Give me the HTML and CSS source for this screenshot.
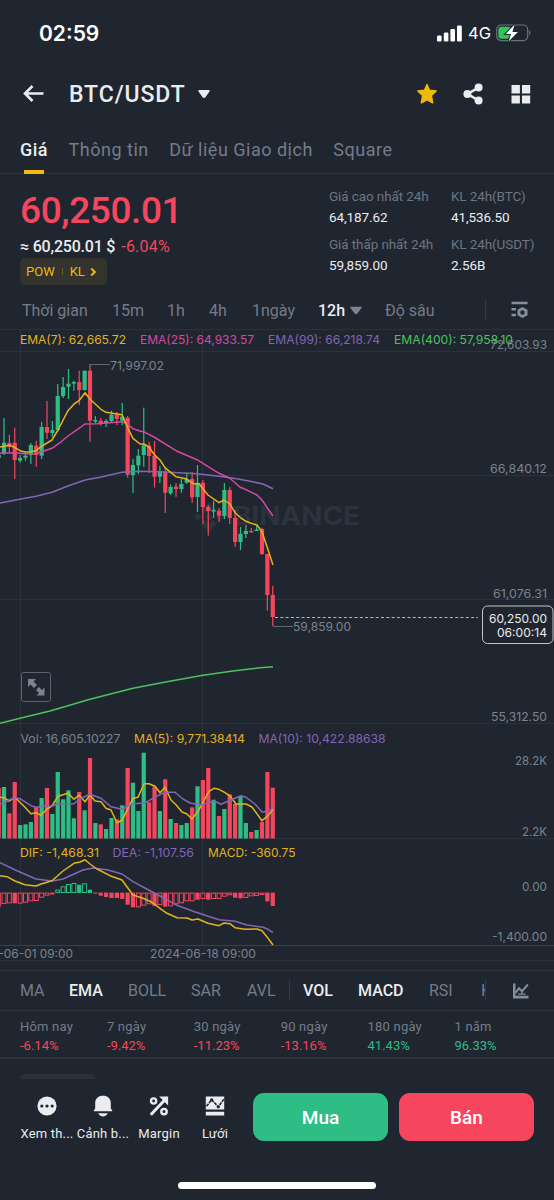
FILE: index.html
```
<!DOCTYPE html>
<html lang="vi">
<head>
	<meta charset="UTF-8">
	<title>BTC/USDT</title>
	<link rel="stylesheet" href="styles.css">
</head>
<body>
	<div class="status">
		<span class="time">02:59</span>
		<svg class="signal" width="26" height="17" viewBox="0 0 26 17" fill="#fff">
			<rect x="0" y="10.5" width="4.6" height="6" rx="1.3"/>
			<rect x="6.8" y="7.5" width="4.6" height="9" rx="1.3"/>
			<rect x="13.4" y="4" width="4.6" height="12.5" rx="1.3"/>
			<rect x="20" y="0.5" width="4.8" height="16" rx="1.3"/>
		</svg>
		<span class="net">4G</span>
		<svg class="battery" width="36" height="18" viewBox="0 0 36 18">
			<rect x="0.7" y="1" width="31" height="15.6" rx="4.5" fill="none" stroke="#6c727a" stroke-width="1.2"/>
			<rect x="2.4" y="2.8" width="12.5" height="12" rx="3" fill="#30c759"/>
			<path d="M33.2 6.2c1.6.5 1.6 4.6 0 5.2z" fill="#6c727a"/>
			<path d="M18.600 0.6L9.600 10h5.400l-2.400 7.400L21.800 8h-5.400z" fill="#fff" stroke="#1f2630" stroke-width="2" paint-order="stroke"/>
		</svg>
	</div>

	<div class="header">
		<svg class="back" width="22" height="18" viewBox="0 0 22 18" fill="none" stroke="#eaecef" stroke-width="2.6"><path d="M20.5 8.500H2.500M9.500 1L2 8.500l7.500 7.500"/></svg>
		<h1>BTC/USDT</h1>
		<svg class="down" width="12" height="9" viewBox="0 0 12 9" fill="#eaecef"><path d="M.5 0h11v1.6L7 7.800H5L.5 1.600z"/></svg>
		<div class="tools">
			<svg width="22" height="22" viewBox="0 0 22 22" fill="#f0b90b" stroke="#f0b90b" stroke-width="1.400" stroke-linejoin="round"><path d="M11 1.600l2.500 5.600 6.700.8-4.800 4.500 1.300 7.400-5.700-2.900-5.700 2.900 1.300-7.400L1.800 8l6.700-.8z"/></svg>
			<svg width="22" height="22" viewBox="0 0 22 22" fill="#eaecef"><path d="M4.500 11L15 4.800M4.500 11L15 17.200" stroke="#eaecef" stroke-width="2.600"/><circle cx="4.400" cy="11" r="4"/><circle cx="15.600" cy="4.500" r="4"/><circle cx="15.600" cy="17.500" r="4"/></svg>
			<svg width="22" height="22" viewBox="0 0 22 22" fill="#eaecef"><path d="M1.500 2h8.400v8.400H1.500zM12 2h8.200v8.400H12zM1.500 12.400h8.400v8.200H1.500zM12 12.400h8.200v8.200H12z"/></svg>
		</div>
	</div>

	<div class="tabs">
		<a class="on">Giá</a>
		<a>Thông tin</a>
		<a>Dữ liệu Giao dịch</a>
		<a>Square</a>
	</div>

	<div class="summary">
		<div class="price">
			<div class="last">60,250.01</div>
			<div class="sub"><span>≈ 60,250.01 $</span><em>-6.04%</em></div>
			<div class="tag"><span>POW</span><i></i><span>KL</span>
				<svg width="7" height="10" viewBox="0 0 7 10" fill="none" stroke="#f0b90b" stroke-width="2"><path d="M1.200 1.500L4.800 5l-3.600 3.500"/></svg>
			</div>
		</div>
		<div class="stats">
			<div><label>Giá cao nhất 24h</label><b>64,187.62</b></div>
			<div><label>KL 24h(BTC)</label><b>41,536.50</b></div>
			<div><label>Giá thấp nhất 24h</label><b>59,859.00</b></div>
			<div><label>KL 24h(USDT)</label><b>2.56B</b></div>
		</div>
	</div>

	<div class="intervals">
		<span>Thời gian</span>
		<span>15m</span>
		<span>1h</span>
		<span>4h</span>
		<span>1ngày</span>
		<span class="on">12h</span>
		<svg width="12" height="9" viewBox="0 0 12 9" fill="#7b838f"><path d="M.300.800h11.400v1L7 8H5L.300 1.800z"/></svg>
		<span>Độ sâu</span>
		<i></i>
		<svg width="17" height="18" viewBox="0 0 17 18" fill="#848e9c"><path d="M.500.800h16v2.500H.500zM.500 7h4.500v2.400H.500zM.500 12.800h4.500v2.400H.500z"/><path fill-rule="evenodd" d="M11.500 6l5 2.800v5.400l-5 2.800-5-2.800V8.800zm0 3.300a2.200 2.200 0 1 0 0 4.400 2.200 2.200 0 0 0 0-4.400z"/></svg>
	</div>

	<!-- biểu đồ nến + khối lượng + MACD -->
	<svg id="chart" class="chart" width="554" height="641" viewBox="0 329 554 641"></svg>

	<div class="indicators">
		<span>MA</span>
		<span class="on">EMA</span>
		<span>BOLL</span>
		<span>SAR</span>
		<span>AVL</span>
		<i></i>
		<span class="on">VOL</span>
		<span class="on">MACD</span>
		<span>RSI</span>
		<span class="cut">KDJ</span>
		<i></i>
		<svg width="16" height="16" viewBox="0 0 16 16" fill="none" stroke="#848e9c" stroke-width="2"><path d="M1.200 0.500v13.600H15.500" stroke-width="2.600"/><path d="M2.500 9.800l3.500-4.500 3 3L14.800 1.500"/><path d="M5 11.200h7.500M8.800 8v3" stroke-width="1.300"/></svg>
	</div>

	<div class="perf">
		<div><label>Hôm nay</label><b class="red">-6.14%</b></div>
		<div><label>7 ngày</label><b class="red">-9.42%</b></div>
		<div><label>30 ngày</label><b class="red">-11.23%</b></div>
		<div><label>90 ngày</label><b class="red">-13.16%</b></div>
		<div><label>180 ngày</label><b class="green">41.43%</b></div>
		<div><label>1 năm</label><b class="green">96.33%</b></div>
	</div>

	<div class="peek"><div></div></div>

	<div class="bottom">
		<div class="act">
			<svg width="20" height="22" viewBox="0 0 20 22"><circle cx="10" cy="11" r="9.600" fill="#eaecef"/><g fill="#1f2630"><circle cx="4.800" cy="11" r="1.600"/><circle cx="10" cy="11" r="1.600"/><circle cx="15.200" cy="11" r="1.600"/></g></svg>
			<span>Xem th...</span>
		</div>
		<div class="act">
			<svg width="20" height="22" viewBox="0 0 20 22" fill="#eaecef"><path d="M2.200 8C2.200 3.500 5.500.8 10 .8S17.800 3.500 17.800 8v5.500l1.400 2v.7H.800v-.7l1.400-2zM5.200 18.200h9.600c-.8 2-2.700 3.200-4.800 3.200s-4-1.200-4.800-3.200z"/></svg>
			<span>Cảnh b...</span>
		</div>
		<div class="act">
			<svg width="20" height="22" viewBox="0 0 20 22" fill="none" stroke="#eaecef" stroke-width="2.400"><circle cx="4.600" cy="6" r="2.600"/><circle cx="15" cy="16.600" r="2.700"/><path d="M1.800 19.800L15.500 5.200" stroke-width="3"/><path d="M10.200 1.600h8.900v8.900z" fill="#eaecef" stroke="none"/></svg>
			<span>Margin</span>
		</div>
		<div class="act">
			<svg width="20" height="22" viewBox="0 0 20 22"><path d="M.800 1.600h18.400v13H.800zM.800 16.800h18.400v3.700H.800z" fill="#eaecef"/><path d="M1.500 11.200L6.700 4.800l6.600 7 5.600-7.600" fill="none" stroke="#1f2630" stroke-width="1.600" stroke-dasharray="3.200 .8"/><g fill="#1f2630"><circle cx="6.700" cy="4.800" r="1.600"/><circle cx="13.300" cy="11.800" r="1.600"/></g></svg>
			<span>Lưới</span>
		</div>
		<button class="buy">Mua</button>
		<button class="sell">Bán</button>
	</div>
	<div class="home"></div>
	<script src="chart.js"></script>
</body>
</html>
```
FILE: styles.css
```
*{
	box-sizing: border-box;
}
body{
	margin: 0;
	width: 554px;
	height: 1200px;
	overflow: hidden;
	background: #1f2630;
	color: #eaecef;
	font-family: Roboto, "Noto Sans", sans-serif;
}
svg{
	display: block;
	flex: none;
}
span,a,label,b{
	white-space: nowrap;
}
.red{color: #f6465d;}
.green{color: #2ebd85;}

/* status bar */
.status{
	display: flex;
	align-items: center;
	height: 66px;
	padding: 0 22px 0 39px;
	font-family: Inter, sans-serif;
	color: #fff;
}
.time{
	font-size: 21px;
	font-weight: 600;
	width: 398px;
}
.net{
	width: 28px;
	margin-left: 5px;
	font-size: 16.500px;
}

/* title */
.header{
	display: flex;
	align-items: center;
	height: 56px;
	padding: 0 22px 0 23px;
}
.header h1{
	margin: 0 0 0 24px;
	width: 129px;
	font-size: 23px;
	font-weight: 500;
	letter-spacing: .9px;
}
.tools{
	display: flex;
	gap: 25px;
	margin-left: auto;
}
.tabs{
	display: flex;
	gap: 20.500px;
	height: 52px;
	padding-left: 20px;
	border-bottom: 1px solid #2b323c;
	font-size: 18px;
	line-height: 55px;
	letter-spacing: .5px;
	color: #747c89;
}
.tabs .on{
	position: relative;
	color: #eaecef;
	font-weight: 500;
}
.tabs .on:after{
	content: "";
	position: absolute;
	left: 4px;
	bottom: -1px;
	width: 20px;
	height: 4px;
	background: #f0b90b;
}

/* price */
.summary{
	display: flex;
	height: 112px;
	padding: 12px 0 0 20px;
}
.price{width: 309px;}
.last{
	height: 50px;
	line-height: 50px;
	font-size: 37px;
	font-weight: 500;
	letter-spacing: -.4px;
	color: #f6465d;
}
.sub{
	height: 22px;
	line-height: 22px;
	font-size: 16px;
	font-weight: 500;
	letter-spacing: -.2px;
}
.sub em{
	margin-left: 6px;
	font-style: normal;
	font-weight: 400;
	letter-spacing: .2px;
	color: #f6465d;
}
.tag{
	display: flex;
	align-items: center;
	width: 87px;
	height: 27px;
	padding-left: 6px;
	border-radius: 5px;
	background: #34332d;
	color: #f0b90b;
	font-size: 13px;
}
.tag i{
	width: 1px;
	height: 7px;
	margin: 0 7px;
	background: #6b5a22;
}
.tag svg{margin-left: 5px;}
.stats{
	display: grid;
	grid-template-columns: 122px 90px;
	grid-auto-rows: 48px;
}
.stats label,.stats b,.perf label,.perf b{
	display: block;
	font-weight: 400;
}
.stats label{
	line-height: 20px;
	font-size: 13.500px;
	letter-spacing: -.1px;
	color: #6d7582;
}
.stats b{
	line-height: 23px;
	font-size: 13.500px;
	letter-spacing: -.1px;
}

.intervals{
	display: grid;
	grid-template-columns: 90px 55px 42px 43px 66px 32px 35px 100px 26px 20px;
	align-items: center;
	height: 43px;
	padding: 5px 0 0 22px;
	font-size: 16px;
	color: #747c89;
}
.intervals i,.indicators i{
	width: 1px;
	height: 21px;
	background: #333a45;
}
.on{color: #eaecef;}
.intervals .on,.indicators .on{font-weight: 500;}

.chart{
	font-family: Inter, sans-serif;
	font-size: 12px;
}

.indicators{
	display: grid;
	grid-template-columns: 49px 59px 63px 56px 42px 14px 55px 71px 52px 4px 28px 20px;
	align-items: center;
	height: 41px;
	padding-left: 20px;
	border-top: 1px solid #2b323c;
	border-bottom: 1px solid #2b323c;
	font-size: 16px;
	color: #747c89;
}
.cut{overflow: hidden;}
.perf{
	display: grid;
	grid-template-columns: repeat(6, 86.900px);
	height: 48px;
	padding: 7px 0 0 20px;
	border-bottom: 2px solid #2b323c;
	font-size: 13px;
	letter-spacing: .2px;
}
.perf label{
	line-height: 18px;
	color: #747c89;
}
.perf b{
	line-height: 19px;
	letter-spacing: 0;
}

.peek{
	height: 20px;
	padding: 15px 0 0 20px;
}
.peek div{
	width: 76px;
	height: 5px;
	border-radius: 5px 5px 0 0;
	background: #2a303a;
}

/* bottom bar */
.bottom{
	display: flex;
	height: 103px;
	padding: 14px 0 0 19px;
}
.act{
	display: flex;
	flex-direction: column;
	align-items: center;
	width: 56px;
	padding-top: 2px;
	font-size: 13px;
	line-height: 18px;
	gap: 8px;
	letter-spacing: .2px;
}
.bottom button{
	width: 135px;
	height: 48px;
	border: 0;
	border-radius: 11px;
	color: #fff;
	font: 500 19px Roboto, "Noto Sans", sans-serif;
}
.buy{
	margin: 0 11px 0 10px;
	background: #2ebd85;
}
.sell{background: #f6465d;}
.home{
	width: 198px;
	height: 7px;
	margin-left: 178px;
	border-radius: 4px;
	background: #fff;
}
```
FILE: chart.js
```
var RED='#f6465d', GREEN='#2ebd85', YELLOW='#e3b31b', PINK='#d448a4', PURPLE='#8465b4', LIME='#4cc25c', GRAY='#7b838f'
var html=''

// x of candle i
function cx(i){ return 4+5.375*i }
function rect(x,y,w,h,c,extra){
	html+='<rect x="'+x+'" y="'+y+'" width="'+w+'" height="'+h+'" fill="'+c+'" '+(extra||'')+'/>'
}
function line(x1,y1,x2,y2,c,extra){
	html+='<line x1="'+x1+'" y1="'+y1+'" x2="'+x2+'" y2="'+y2+'" stroke="'+c+'" '+(extra||'')+'/>'
}
function poly(pts,c){
	html+='<polyline points="'+pts+'" fill="none" stroke="'+c+'" stroke-width="1.5" stroke-linejoin="round"/>'
}
// w = text width
function text(x,y,w,s,c,extra){
	html+='<text x="'+x+'" y="'+y+'" textLength="'+w+'" lengthAdjust="spacingAndGlyphs" fill="'+c+'" '+(extra||'')+'>'+s+'</text>'
}

// grid
var hs=[329.5,351.5,475.5,599.5,723.5,838.5,960.5]
for(var i=0;i<hs.length;i++){ line(0,hs[i],554,hs[i],'#2b323c') }
line(20.5,330,20.5,945,'#2b323c')
line(202.5,330,202.5,945,'#2b323c')
line(0,945.5,554,945.5,'#3a414b')

// watermark
html+='<g fill="#2c333d"><path d="M209 502l8 8-4 4-4-4-4 4-4-4zM209 532l8-8-4-4-4 4-4-4-4 4zM198 513l4 4-4 4-4-4zM220 513l4 4-4 4-4-4zM209 513l4 4-4 4-4-4z"/></g>'
text(233,524.5,127,'BINANCE','#2c333d','font-size="25" font-weight="700"')

// [up, high, low, body top, body bottom]
var candles=[
	[1,418,455,442.7,453],[0,434.7,452,443,447],[0,427.7,479,442.7,460],[1,455,462.7,458,460.7],[1,451.7,460.7,455.7,457.7],
	[1,443,464,445,455],[0,440.7,466.7,445.7,455],[1,421.7,459,427,455.7],[0,401,439,427,432.7],[1,421,436.7,430,433],
	[1,384,432,396,430],[1,377,398,387,396],[1,369,399,383.7,386.7],[1,380.7,390.7,382,383.5],[0,370.7,405,382,390],
	[1,370.7,390.7,370.7,390],[0,364,441.7,370.7,420.7],[1,416,423,420,421.5],[0,418,425.7,420.7,423],[1,419,427,421,423],
	[1,410.7,423,414.7,421],[0,412,425,414.7,419],[1,403,425,416.7,420.7],[0,416,477.7,417.7,474.7],[1,459,493,465,475],
	[1,449,474,455.7,465.3],[1,407.7,466.7,445.3,455],[0,441.7,473,445.7,456],[0,441,487.7,455.7,476.7],[1,466,483,471,476.7],
	[0,467,513,471.7,492.7],[1,484.7,495,487,493.3],[0,483,496.7,486.7,489],[1,479,492.7,484,489],[1,472.7,483.7,479,482.7],
	[0,472,503,479,497.3],[1,465,512,482.7,497],[0,480,524,482.7,507],[0,505,535.7,507,511],[1,500.7,518,510,511.5],
	[0,508,522,510.7,515.7],[1,483,519,490,516],[0,487,524,490,518],[0,510,547,518,542],[1,527,550,533.7,542],
	[1,525,538,531,534],[0,528,533,531,532.3],[1,526,531,529.5,531],[0,527.7,555,529,554],[0,554,610.7,554,595],[0,586,626,595,617]
]
// volume bar tops
var vol=[787,813.3,782,825,824.3,822,807.3,798,788,814,772,799.3,790.3,818.3,792,810.3,758,823,824.3,829,818,819.3,805.3,768,782.7,811,
	752.7,802.3,786.7,811,779.3,819,823,825,823,807.3,786.3,780,768,799.7,816,809,794.3,804,796.3,823,832,830,822,772,787.7]
for(var i=0;i<candles.length;i++){
	var k=candles[i], c=k[0]?GREEN:RED, x=cx(i)
	rect(x-.6,k[1],1.2,k[2]-k[1],c)
	rect(x-2.1,k[3],4.2,k[4]-k[3],c)
	rect(x-2.1,vol[i],4.2,838.5-vol[i],c)
}
rect(0,788,.8,50,RED)
rect(0,455,.8,3,GREEN)

// EMA
poly('0,503 17,499.7 36,496.3 52,492.3 68,486 85,480 100,477.3 122,472.3 140,471.3 165,472 197,473.7 219,476.3 237,478.7 250,481.3 263,484 273,488.7',PURPLE)
poly('0,453.3 15,452.7 25,453.7 36,453.7 52,448.3 60,442.7 68,436 79,428.3 85,424 97,423.7 122,421.7 128,424.7 133,428.7 140,431 145,432.3 154,437 176,450.7 197,459.7 219,473.3 230,478.3 240,487.3 243,488.3 257,495 262,500 267,507.3 273,516',PINK)
poly('0,447 9,445.3 14.7,447.3 20,450.7 25,452 31,451.7 36,450.7 42,446 52,440 58,430 68,410.7 74,404 79,400.7 85,392.7 90,399.3 101,409.3 106,412.3 122,414.7 128,428.3 133,438.3 140,444 144,444 149,447 154,454.3 160,460 165,467.7 171,472.7 176,476.7 186,478.7 193,483.7 199,483.7 208,495 219,502.7 224,500 230,504 235,512.7 241,518 246,521.3 251,523.3 257,525 262,531.7 267,546.7 273,565',YELLOW)
poly('0,723.3 20,718.3 50,711 90,699.3 133,688.3 167,681.7 203,675.3 233,671 260,667.7 273,666.7',LIME)

// MA
poly('0,797.3 4,797.7 9,801 15,797.3 20,802.3 25,807.3 31,813.7 36,812.7 41,815.3 47,809 52,806 58,796.3 63,794.7 68,793.3 74,799.3 79,795 85,801.7 90,795 95,801 101,801.7 106,808.3 111,810 117,822.7 122,820.3 128,808.3 133,798.3 138,797.3 144,783.7 149,783.7 155,786.3 160,792.7 165,787.3 171,800 176,804.7 182,812 187,814 192,819 198,811.3 209,791.3 214,788.3 219,789.3 225,792.7 230,796 236,804 246,804 252,807 262,820.7 268,815.7 273,809.3',YELLOW)
poly('0,803.7 4,803.7 9,799.7 15,797.7 20,798.7 31,805.7 36,807.3 47,805.7 52,806.3 58,803.7 74,803.7 79,799.3 90,794.3 101,798.3 111,806.7 122,809.3 133,803.7 145,803 155,797 165,792.3 175,792.3 182,798.3 190,803 201,805 214,801 221,804.3 230,800.3 241,795.7 246,797.3 255,804 262,812 268,811.3 273,807.3',PURPLE)

// MACD, [bar end, filled]
var macd=[[904,0],[903.3,0],[903.3,1],[903.7,0],[902.7,0],[901.3,0],[901,0],[897.7,0],[895.7,0],[894.5,1],[889.7,0],[886.3,0],[884,0],[883,0],[884.7,1],[883.3,0],[889.7,1],
	[893.7,1],[895.7,1],[897,1],[898,1],[898,1],[899,1],[904.7,1],[907.3,1],[907.3,0],[905.7,0],[904.3,0],[906,1],[905,0],[906.7,1],[906.3,0],[904.3,0],[903.3,0],[901.3,0],[901.3,0],
	[899.7,1],[899,0],[899.7,1],[899,0],[899,0],[896.7,0],[895.3,0],[897.7,1],[898.3,1],[898,0],[896.3,0],[896,0],[895,0],[901.3,1],[906,1]]
rect(0,892.6,.8,14,RED)
for(var i=0;i<macd.length;i++){
	var end=macd[i][0], up=end<893, zero=up?893:892.6, x=cx(i)
	var y=Math.min(end,zero), h=Math.abs(end-zero), c=up?GREEN:RED
	if(macd[i][1]){ rect(x-2.1,y,4.2,h,c) }
	else { rect(x-2,y+.5,4,Math.max(h-1,.8),'none','stroke="'+c+'"') }
}
poly('0,862.7 17,870.7 36,879 52,881 63,879 83,870 93,868 107,869.7 122,874 133,881.7 143,887 160,896 177,905.3 193,911.3 219,919.7 235,921.3 247,925 263,927.3 268,929.3 273,932.7',PURPLE)
poly('0,875.7 7,876.7 15,881 25,884.7 36,886 41,884 52,880.7 63,871 74,863.3 80,862 85,859.7 90,864 97,869 110,875.7 122,880 128,888.3 133,895 143,898.3 152,902.3 160,908.3 167,913.3 177,917.7 187,918 192,920 198,919 208,923.3 219,925.7 224,923 230,923.7 235,927.7 245,929.3 257,929 262,930.7 268,938.3 273,945',YELLOW)

// legends
text(20,344,106,'EMA(7): 62,665.72',YELLOW)
text(140,344,114,'EMA(25): 64,933.57',PINK)
text(268,344,112,'EMA(99): 66,218.74',PURPLE)
text(490,349,57,'72,603.93',GRAY)
text(394,344,119,'EMA(400): 57,958.10',LIME)
text(20.5,743,100,'Vol: 16,605.10227',GRAY)
text(134,743,111,'MA(5): 9,771.38414',YELLOW)
text(258.5,743,127,'MA(10): 10,422.88638',PURPLE)
text(20,857,79,'DIF: -1,468.31',YELLOW)
text(112.5,857,81.5,'DEA: -1,107.56',PURPLE)
text(208,857,87.5,'MACD: -360.75',YELLOW)

// axis
text(490,473,57,'66,840.12',GRAY)
text(493,597.5,54,'61,076.31',GRAY)
text(491,721,56,'55,312.50',GRAY)
text(515,765,32,'28.2K',GRAY)
text(522,836,25,'2.2K',GRAY)
text(522,891,25,'0.00',GRAY)
text(492,940.5,55,'-1,400.00',GRAY)
text(-31,957.5,104,'2024-06-01 09:00',GRAY)
text(150,957.5,106,'2024-06-18 09:00',GRAY)

// high, low, last price
line(90,364.5,110,364.5,'#626974')
text(110,370,54,'71,997.02',GRAY)
line(273,626.5,293,626.5,'#626974')
text(293,631,58,'59,859.00',GRAY)
line(275,617.5,478,617.5,'#b4b8be','stroke-dasharray="3 2.3"')
rect(482.5,606,70.5,37.5,'#1f2630','rx="5" stroke="#c3c7cc"')
text(489,622.5,58,'60,250.00','#eaecef')
text(497,637,50,'06:00:14','#eaecef')

// full screen button
rect(21.5,672.5,29,29,'none','rx="2" stroke="#5b636f"')
html+='<path d="M28 679h8l-2.5 2.5 3.5 3.5-3 3-3.5-3.5L28 687zM44.5 695.5h-8l2.5-2.5-3-3 3-3 3 3 2.5-2.5z" fill="#7b838f"/>'

document.getElementById('chart').innerHTML=html
```
